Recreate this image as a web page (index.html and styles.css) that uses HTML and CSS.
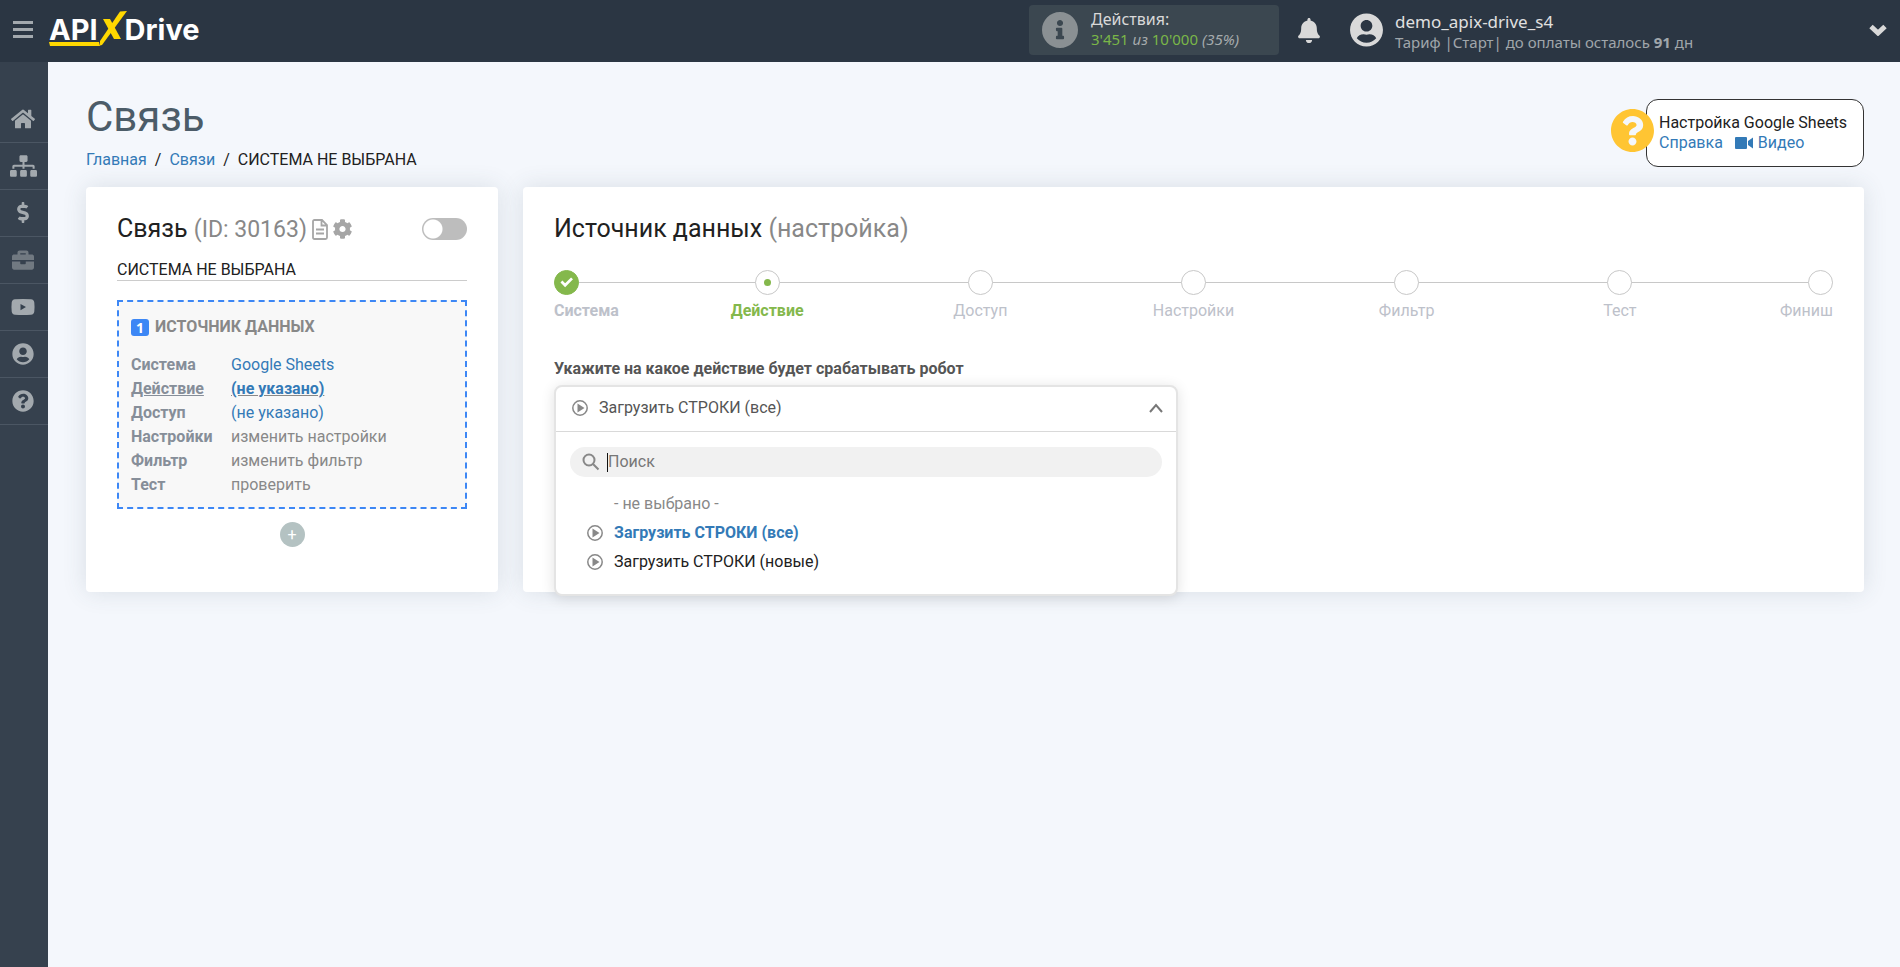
FILE: index.html
```html
<!DOCTYPE html>
<html lang="ru">
<head>
<meta charset="utf-8">
<title>Связь</title>
<link rel="stylesheet" href="styles.css">
</head>
<body>
<svg class="sprite" aria-hidden="true">
  <symbol id="i-user" viewBox="0 0 496 512"><path d="M248 8C111 8 0 119 0 256s111 248 248 248 248-111 248-248S385 8 248 8zm0 96c48.600 0 88 39.400 88 88s-39.400 88-88 88-88-39.400-88-88 39.400-88 88-88zm0 344c-58.700 0-111.300-26.600-146.500-68.200 18.800-35.400 55.600-59.800 98.500-59.800 2.400 0 4.800.4 7.100 1.100 13 4.200 26.600 6.900 40.900 6.900 14.300 0 28-2.700 40.900-6.900 2.300-.7 4.700-1.100 7.100-1.100 42.900 0 79.700 24.400 98.500 59.800C359.300 421.400 306.700 448 248 448z"/></symbol>
  <symbol id="i-question" viewBox="0 0 512 512"><path d="M504 256c0 136.997-111.043 248-248 248S8 392.997 8 256C8 119.083 119.043 8 256 8s248 111.083 248 248zM262.655 90c-54.497 0-89.255 22.957-116.549 63.758-3.536 5.286-2.353 12.415 2.715 16.258l34.699 26.310c5.205 3.947 12.621 3.008 16.665-2.122 17.864-22.658 30.113-35.797 57.303-35.797 20.429 0 45.698 13.148 45.698 32.958 0 14.976-12.363 22.667-32.534 33.976C247.128 238.528 216 254.941 216 296v4c0 6.627 5.373 12 12 12h56c6.627 0 12-5.373 12-12v-1.333c0-28.462 83.186-29.647 83.186-106.667 0-58.002-60.165-102-116.531-102zM256 338c-25.365 0-46 20.635-46 46 0 25.364 20.635 46 46 46s46-20.636 46-46c0-25.365-20.635-46-46-46z"/></symbol>
  <symbol id="i-play" viewBox="0 0 16 16"><circle cx="8" cy="8" r="7.200" fill="none" stroke="currentColor" stroke-width="1.500"/><path d="M5.500 3.500v9L12.500 8z"/></symbol>
</svg>

<header class="topbar">
  <button class="icon-button burger" type="button" aria-label="Меню">
    <svg viewBox="0 0 20 18"><path d="M0 0h20v3H0zM0 7h20v3H0zM0 14h20v3H0z"/></svg>
  </button>
  <a class="logo" href="#" aria-label="APIXDrive">
    <span>API</span>
    <svg class="logo-x" viewBox="0 0 80 38" aria-hidden="true"><path d="M0 33h50l1 4H1z"/><path d="M71 2.500L78 2 53 36l-2 .5V32z"/><path d="M54 10h7l11 20h-7z"/></svg>
    <span class="logo-tail">Drive</span>
  </a>
  <div class="topbar-right">
    <a class="usage" href="#">
      <svg class="usage-icon" viewBox="8 8 496 496"><path d="M256 8C119.043 8 8 119.083 8 256c0 136.997 111.043 248 248 248s248-111.003 248-248C504 119.083 392.957 8 256 8zm0 110c23.196 0 42 18.804 42 42s-18.804 42-42 42-42-18.804-42-42 18.804-42 42-42zm56 254c0 6.627-5.373 12-12 12h-88c-6.627 0-12-5.373-12-12v-24c0-6.627 5.373-12 12-12h12v-64h-12c-6.627 0-12-5.373-12-12v-24c0-6.627 5.373-12 12-12h64c6.627 0 12 5.373 12 12v100h12c6.627 0 12 5.373 12 12v24z"/></svg>
      <span class="usage-text">
        <span class="usage-title">Действия:</span>
        <span class="usage-count"><b>3'451</b> <i>из</i> <b>10'000</b> <i>(35%)</i></span>
      </span>
    </a>
    <button class="icon-button bell" type="button" aria-label="Уведомления">
      <svg viewBox="0 0 448 512"><path d="M224 512c35.320 0 63.970-28.650 63.970-64H160.030c0 35.350 28.650 64 63.970 64zm215.390-149.710c-19.320-20.760-55.470-51.990-55.470-154.290 0-77.700-54.480-139.900-127.940-155.160V32c0-17.670-14.320-32-31.980-32s-31.980 14.330-31.980 32v20.840C118.560 68.100 64.080 130.300 64.080 208c0 102.300-36.150 133.530-55.470 154.290-6 6.450-8.660 14.160-8.610 21.710.11 16.400 12.980 32 32.100 32h383.800c19.120 0 32-15.600 32.100-32 .05-7.550-2.610-15.270-8.610-21.710z"/></svg>
    </button>
    <a class="account" href="#">
      <svg class="account-icon"><use href="#i-user"/></svg>
      <span class="account-text">
        <span class="account-name">demo_apix-drive_s4</span>
        <span class="account-plan">Тариф |Старт| до оплаты осталось <b>91</b> дн</span>
      </span>
    </a>
    <button class="icon-button more" type="button" aria-label="Ещё">
      <svg viewBox="0 0 18 12"><path d="M2 2.500l7 6.500 7-6.500" fill="none" stroke="currentColor" stroke-width="5"/></svg>
    </button>
  </div>
</header>

<div class="shell">
  <nav class="sidebar" aria-label="Разделы">
    <a href="#" aria-label="Главная"><svg class="w24" viewBox="0 0 576 512"><path d="M280.370 148.260L96 300.110V464a16 16 0 0 0 16 16l112.060-.29a16 16 0 0 0 15.920-16V368a16 16 0 0 1 16-16h64a16 16 0 0 1 16 16v95.640a16 16 0 0 0 16 16.050L464 480a16 16 0 0 0 16-16V300L295.670 148.260a12.190 12.190 0 0 0-15.300 0zM571.600 251.470L488 182.560V44.050a12 12 0 0 0-12-12h-56a12 12 0 0 0-12 12v72.610L318.470 43a48 48 0 0 0-61 0L4.340 251.470a12 12 0 0 0-1.600 16.900l25.500 31A12 12 0 0 0 45.150 301l235.220-193.740a12.190 12.190 0 0 1 15.300 0L530.900 301a12 12 0 0 0 16.900-1.600l25.500-31a12 12 0 0 0-1.700-16.930z"/></svg></a>
    <a href="#" aria-label="Связи"><svg class="w27" viewBox="0 0 640 512"><path d="M128 352H32c-17.670 0-32 14.330-32 32v96c0 17.670 14.330 32 32 32h96c17.670 0 32-14.330 32-32v-96c0-17.670-14.330-32-32-32zm-24-80h192v48h48v-48h192v48h48v-57.590c0-21.170-17.230-38.410-38.410-38.410H344v-64h40c17.670 0 32-14.330 32-32V32c0-17.670-14.330-32-32-32H256c-17.670 0-32 14.330-32 32v96c0 17.670 14.330 32 32 32h40v64H94.410C73.230 224 56 241.230 56 262.410V320h48v-48zm264 80h-96c-17.670 0-32 14.330-32 32v96c0 17.670 14.330 32 32 32h96c17.670 0 32-14.330 32-32v-96c0-17.670-14.330-32-32-32zm240 0h-96c-17.670 0-32 14.330-32 32v96c0 17.670 14.330 32 32 32h96c17.670 0 32-14.330 32-32v-96c0-17.670-14.330-32-32-32z"/></svg></a>
    <a href="#" aria-label="Оплата"><svg class="w12" viewBox="0 0 288 512"><path d="M209.200 233.400l-108-31.600C88.700 198.200 80 186.500 80 173.500c0-16.300 13.200-29.500 29.500-29.500h66.300c12.200 0 24.200 3.700 34.200 10.500 6.100 4.100 14.300 3.100 19.500-2l34.800-34c7.100-6.900 6.100-18.400-1.800-24.500C238 74.800 207.400 64.100 176 64V16c0-8.800-7.200-16-16-16h-32c-8.800 0-16 7.200-16 16v48h-2.500C45.800 64-5.400 118.700.5 183.600c4.200 46.100 39.400 83.600 83.800 96.600l102.500 30c12.500 3.700 21.200 15.300 21.200 28.300 0 16.300-13.200 29.500-29.500 29.500h-66.300C100 368 88 364.300 78 357.500c-6.100-4.100-14.300-3.100-19.500 2l-34.800 34c-7.100 6.900-6.100 18.400 1.800 24.500 24.500 19.200 55.100 29.900 86.500 30v48c0 8.800 7.200 16 16 16h32c8.800 0 16-7.200 16-16v-48.200c46.600-.9 90.300-28.600 105.700-72.700 21.500-61.600-14.600-124.800-72.500-141.700z"/></svg></a>
    <a class="muted" href="#" aria-label="Проекты"><svg class="w22" viewBox="0 0 512 512"><path d="M320 336c0 8.840-7.160 16-16 16h-96c-8.840 0-16-7.160-16-16v-48H0v144c0 25.600 22.400 48 48 48h416c25.600 0 48-22.400 48-48V288H320v48zm144-208h-80V80c0-25.600-22.400-48-48-48H176c-25.600 0-48 22.400-48 48v48H48c-25.600 0-48 22.400-48 48v80h512v-80c0-25.600-22.400-48-48-48zm-144 0H192V96h128v32z"/></svg></a>
    <a href="#" aria-label="Видео"><svg class="w24" viewBox="0 0 24 16"><path fill-rule="evenodd" d="M4 .3Q12-.3 20 .3 23 .5 23.300 3.500 23.800 8 23.300 12.500 23 15.500 20 15.700 12 16.300 4 15.700 1 15.500.7 12.500.2 8 .7 3.500 1 .5 4 .3zM9.500 5v6.200L15 8.100z"/></svg></a>
    <a href="#" aria-label="Профиль"><svg class="w22"><use href="#i-user"/></svg></a>
    <a href="#" aria-label="Помощь"><svg class="w22"><use href="#i-question"/></svg></a>
  </nav>

  <main class="content">
    <div class="page-head">
      <div>
        <h1>Связь</h1>
        <nav class="crumbs" aria-label="Навигация"><a href="#">Главная</a><span>/</span><a href="#">Связи</a><span>/</span><span>СИСТЕМА НЕ ВЫБРАНА</span></nav>
      </div>
      <aside class="help">
        <svg class="help-badge" viewBox="8 8 496 496"><circle cx="256" cy="256" r="240" fill="#f4f7fc"/><use href="#i-question" width="512" height="512"/></svg>
        <div>Настройка Google Sheets</div>
        <div class="help-links"><a href="#">Справка</a><a href="#"><svg viewBox="0 0 18 12"><path d="M1 0h10q1 0 1 1v10q0 1-1 1H1q-1 0-1-1V1q0-1 1-1zM13 4l5-3.500v11L13 8z"/></svg>Видео</a></div>
      </aside>
    </div>

    <div class="columns">
      <section class="card">
        <div class="link-head">
          <h2>Связь <span class="link-id">(ID: 30163)</span></h2>
          <button class="icon-button doc" type="button" aria-label="Журнал"><svg viewBox="0 0 16 21"><path d="M2.500 1H10l5 5v12.500Q15 20 13.500 20h-11Q1 20 1 18.500v-16Q1 1 2.500 1zM9.500 1v5.500H15M4 10.500h8M4 14.500h8" fill="none" stroke="currentColor" stroke-width="1.800"/></svg></button>
          <button class="icon-button cog" type="button" aria-label="Настройки связи"><svg viewBox="12 8 488 496"><path d="M487.400 315.700l-42.600-24.600c4.300-23.200 4.300-47 0-70.200l42.600-24.600c4.900-2.800 7.100-8.600 5.500-14-11.100-35.600-30-67.800-54.700-94.600-3.800-4.100-10-5.100-14.800-2.300L380.800 110c-17.900-15.400-38.500-27.300-60.800-35.100V25.800c0-5.600-3.900-10.500-9.400-11.700-36.700-8.200-74.300-7.800-109.200 0-5.500 1.200-9.400 6.100-9.400 11.700V75c-22.200 7.900-42.800 19.800-60.800 35.100L88.700 85.500c-4.900-2.800-11-1.900-14.800 2.300-24.700 26.700-43.600 58.900-54.700 94.600-1.700 5.400.6 11.200 5.500 14L67.300 221c-4.300 23.200-4.300 47 0 70.200l-42.600 24.600c-4.900 2.800-7.100 8.600-5.500 14 11.100 35.600 30 67.800 54.700 94.600 3.800 4.100 10 5.100 14.800 2.300l42.600-24.600c17.900 15.400 38.500 27.300 60.800 35.100v49.200c0 5.600 3.900 10.500 9.400 11.700 36.700 8.200 74.300 7.800 109.200 0 5.500-1.200 9.400-6.100 9.400-11.700v-49.200c22.200-7.900 42.800-19.800 60.800-35.100l42.600 24.600c4.900 2.800 11 1.900 14.800-2.300 24.700-26.700 43.600-58.900 54.700-94.600 1.500-5.500-.7-11.300-5.600-14.100zM256 336c-44.100 0-80-35.900-80-80s35.900-80 80-80 80 35.900 80 80-35.900 80-80 80z"/></svg></button>
          <input class="toggle" type="checkbox" role="switch" aria-label="Включить связь">
        </div>
        <div class="link-name">СИСТЕМА НЕ ВЫБРАНА</div>
        <div class="source">
          <h3><span class="num">1</span>ИСТОЧНИК ДАННЫХ</h3>
          <dl>
            <dt>Система</dt><dd><a href="#">Google Sheets</a></dd>
            <dt class="current">Действие</dt><dd class="current"><a href="#">(не указано)</a></dd>
            <dt>Доступ</dt><dd><a href="#">(не указано)</a></dd>
            <dt>Настройки</dt><dd>изменить настройки</dd>
            <dt>Фильтр</dt><dd>изменить фильтр</dd>
            <dt>Тест</dt><dd>проверить</dd>
          </dl>
        </div>
        <button class="add" type="button" aria-label="Добавить блок">+</button>
      </section>

      <section class="card">
        <h2>Источник данных <span>(настройка)</span></h2>
        <ol class="steps">
          <li class="done"><i class="dot"><svg viewBox="0 0 25 25"><path d="M7 11.500l4 4 7.500-7.500" fill="none" stroke="#fff" stroke-width="3"/></svg></i>Система</li>
          <li class="active"><i class="dot"></i>Действие</li>
          <li><i class="dot"></i>Доступ</li>
          <li><i class="dot"></i>Настройки</li>
          <li><i class="dot"></i>Фильтр</li>
          <li><i class="dot"></i>Тест</li>
          <li><i class="dot"></i>Финиш</li>
        </ol>
        <div class="field">
          <div class="field-label" id="action-label">Укажите на какое действие будет срабатывать робот</div>
          <div class="picker">
            <button class="picker-value" type="button" aria-haspopup="listbox" aria-expanded="true" aria-labelledby="action-label">
              <svg class="play"><use href="#i-play"/></svg>Загрузить СТРОКИ (все)
              <svg class="arrow" viewBox="0 0 14 10"><path d="M1 9l6-7 6 7" fill="none" stroke="currentColor" stroke-width="2"/></svg>
            </button>
            <div class="picker-menu">
              <label class="search">
                <svg viewBox="0 0 18 18"><path d="M11.500 11.500L16.500 16.500M12.500 7A5.500 5.500 0 1 1 1.500 7a5.500 5.500 0 0 1 11 0z" fill="none" stroke="currentColor" stroke-width="2"/></svg>
                <span class="caret"></span>
                <input type="text" placeholder="Поиск" aria-label="Поиск">
              </label>
              <ul class="options" role="listbox" aria-labelledby="action-label">
                <li class="none" role="option">- не выбрано -</li>
                <li class="selected" role="option" aria-selected="true"><svg class="play"><use href="#i-play"/></svg>Загрузить СТРОКИ (все)</li>
                <li role="option"><svg class="play"><use href="#i-play"/></svg>Загрузить СТРОКИ (новые)</li>
              </ul>
            </div>
          </div>
        </div>
      </section>
    </div>
  </main>
</div>
</body>
</html>
```
FILE: styles.css
```css
* { box-sizing: border-box; }

body {
  margin: 0;
  min-height: 100vh;
  display: flex;
  flex-direction: column;
  background: #f4f7fc;
  color: #212121;
  font: 16px/20px Roboto, "Noto Sans", sans-serif;
}

a { color: #337ab7; text-decoration: none; }
h1, h2, h3, ul, ol, dl, dd { margin: 0; padding: 0; }
ul, ol { list-style: none; }
svg { display: block; fill: currentColor; flex: none; }
.sprite { width: 0; height: 0; position: absolute; }

.icon-button {
  padding: 0;
  border: 0;
  background: none;
  color: inherit;
  cursor: pointer;
}

/* Top bar */
.topbar {
  display: flex;
  align-items: center;
  height: 62px;
  padding: 0 13px 2px;
  background: #2b3643;
  color: #d9d9d9;
  font-family: "Noto Sans", sans-serif;
}
.burger { color: #a3a9ae; }
.burger svg { width: 20px; height: 18px; }

.logo {
  position: relative;
  display: flex;
  margin-left: 16px;
  color: #fff;
  font: 700 29px/36px Inter, sans-serif;
}
.logo-x {
  position: absolute;
  top: -3px;
  left: 0;
  width: 80px;
  height: 38px;
  color: #ffd800;
}
.logo-tail { margin-left: 27px; }

.topbar-right {
  display: flex;
  flex: 1;
  align-items: center;
  justify-content: flex-end;
}
.usage {
  display: flex;
  align-items: center;
  gap: 13px;
  width: 250px;
  height: 50px;
  margin-right: 18px;
  padding: 0 13px;
  border-radius: 4px;
  background: #3b4750;
  color: #d9d9d9;
}
.usage-icon { width: 36px; height: 36px; color: #8a9093; }
.usage-text, .account-text { display: flex; flex-direction: column; }
.usage-text { padding-bottom: 2px; }
.account-text { padding-top: 4px; }
.usage-count { font-size: 15px; color: #a6abad; }
.usage-count b { font-weight: 400; color: #7ab648; }

.bell svg { width: 24px; height: 25px; }
.account {
  display: flex;
  align-items: center;
  gap: 12px;
  flex: 0 1 519px;
  margin-left: 29px;
  color: #e0e0e0;
}
.account-icon { width: 33px; height: 34px; color: #d9d9d9; }
.account-name { font-size: 17px; }
.account-plan { font-size: 15px; color: #a0a6ab; }
.more svg { width: 18px; height: 12px; }

/* Side menu */
.shell { display: flex; flex: 1; }
.sidebar {
  width: 48px;
  padding-top: 34px;
  background: #36414e;
  color: #a3a9ae;
}
.sidebar a {
  display: flex;
  align-items: center;
  justify-content: center;
  height: 47px;
  padding: 0 2px 1px 0;
  border-bottom: 1px solid #4b5663;
  color: inherit;
}
.sidebar .muted { color: #717981; }
.w12 { width: 12px; height: 21px; }
.w22 { width: 22px; height: 22px; }
.w24 { width: 24px; height: 22px; }
.w27 { width: 27px; height: 22px; }

/* Page heading */
.content { flex: 1; min-width: 0; padding: 30px 36px 40px 38px; }
.page-head {
  display: flex;
  align-items: flex-start;
  justify-content: space-between;
  margin-bottom: 17px;
}
h1 {
  font-size: 42px;
  line-height: 50px;
  font-weight: 400;
  color: #4c5c68;
}
.crumbs { display: flex; gap: 8px; margin-top: 8px; }

.help {
  position: relative;
  min-width: 218px;
  margin-top: 7px;
  padding: 13px 12px;
  border: 1px solid #333;
  border-radius: 12px;
  background: #fff;
}
.help-badge {
  position: absolute;
  top: 9px;
  left: -36px;
  width: 43px;
  height: 43px;
  color: #ffc533;
}
.help-links { display: flex; gap: 12px; }
.help-links a { display: flex; align-items: center; gap: 5px; }
.help-links svg { width: 18px; height: 12px; }

/* Cards */
.columns {
  display: grid;
  grid-template-columns: 412px minmax(0, 1fr);
  gap: 25px;
}
.card {
  padding: 27px 31px 45px;
  border-radius: 4px;
  background: #fff;
  box-shadow: 0 0 24px rgba(60, 75, 95, 0.14);
}
h2 {
  font-size: 25px;
  line-height: 30px;
  font-weight: 400;
}
h2 span { color: #888; }
h2 .link-id { font-size: 23px; line-height: 20px; }

.link-head { display: flex; align-items: center; gap: 5px; }
.link-head .icon-button { color: #a6a6a6; }
.doc svg { width: 16px; height: 21px; }
.cog svg { width: 19px; height: 20px; }
.toggle {
  appearance: none;
  width: 45px;
  height: 22px;
  margin: 0 0 0 auto;
  border-radius: 11px;
  background: radial-gradient(circle at 11px 11px, #fff 9px, #bdbdbd 10px);
}
.link-name {
  margin-top: 16px;
  border-bottom: 1px solid #ccc;
}
.source {
  margin-top: 19px;
  padding: 15px 12px 10px;
  border: 2px dashed #3d87f5;
  background: #f8f8f8;
  color: #888;
}
h3 {
  display: flex;
  align-items: center;
  gap: 6px;
  margin-bottom: 16px;
  font-size: 16px;
  line-height: 20px;
  font-weight: 700;
}
.num {
  width: 18px;
  height: 17px;
  border-radius: 3px;
  background: #3d87f5;
  color: #fff;
  font: 700 14px/17px "Noto Sans", sans-serif;
  text-align: center;
}
dl {
  display: grid;
  grid-template-columns: 100px 1fr;
  line-height: 24px;
}
dt { color: #868e99; font-weight: 700; }
.current { font-weight: 700; text-decoration: underline; }
.add {
  display: block;
  width: 25px;
  height: 25px;
  margin: 13px auto 0;
  padding: 0;
  border: 0;
  border-radius: 50%;
  background: #b4c2c2;
  color: #fff;
  font: 16px/24px Roboto, sans-serif;
}

/* Wizard steps */
.steps {
  display: flex;
  margin-top: 26px;
  color: #bdc1ca;
}
.steps li {
  position: relative;
  display: flex;
  flex: 2;
  flex-direction: column;
  align-items: center;
  gap: 6px;
}
.steps li:first-child { flex: 1; align-items: flex-start; }
.steps li:last-child { flex: 1; align-items: flex-end; }
.steps li::before {
  content: "";
  position: absolute;
  top: 12px;
  left: 0;
  right: 0;
  border-top: 1px solid #c8c8c8;
}
.dot {
  position: relative;
  display: flex;
  align-items: center;
  justify-content: center;
  width: 25px;
  height: 25px;
  border: 1px solid #c8c8c8;
  border-radius: 50%;
  background: #fff;
}
.done, .active { font-weight: 700; }
.done .dot { border-color: #84b84c; background: #84b84c; }
.active { color: #84b84c; }
.active .dot::after {
  content: "";
  width: 7px;
  height: 7px;
  border-radius: 50%;
  background: #84b84c;
}

/* Action picker */
.field { margin-top: 38px; }
.field-label { color: #555; font-weight: 700; }
.picker {
  position: absolute;
  width: calc((100vw - 622px) / 2 - 15px);
  min-width: 320px;
  margin-top: 6px;
  border: 2px solid #e4e4e4;
  border-radius: 8px;
  background: #fff;
  box-shadow: 0 2px 14px rgba(0, 0, 0, 0.12);
}
.picker-value {
  display: flex;
  align-items: center;
  width: 100%;
  height: 45px;
  padding: 0 13px 3px 16px;
  border: 0;
  border-bottom: 1px solid #d9d9d9;
  background: none;
  color: #555;
  font: inherit;
}
.play { width: 16px; height: 16px; margin-right: 11px; color: #888; }
.arrow { width: 14px; height: 10px; margin-left: auto; color: #777; }
.picker-menu { padding: 15px 14px 18px; }
.search {
  display: flex;
  align-items: center;
  height: 30px;
  padding-left: 12px;
  border-radius: 15px;
  background: #f1f1f1;
}
.search svg { width: 18px; height: 18px; margin-right: 7px; color: #888; }
.caret { width: 1px; height: 19px; background: #111; }
.search input {
  flex: 1;
  min-width: 0;
  padding: 0;
  border: 0;
  outline: 0;
  background: none;
  color: #212121;
  font: inherit;
}
.search input::placeholder { color: #777; }
.options { margin-top: 12px; }
.options li {
  display: flex;
  align-items: center;
  height: 29px;
  padding-left: 17px;
}
.options .none { padding-left: 44px; color: #888; }
.options .selected { color: #337ab7; font-weight: 700; }
```
